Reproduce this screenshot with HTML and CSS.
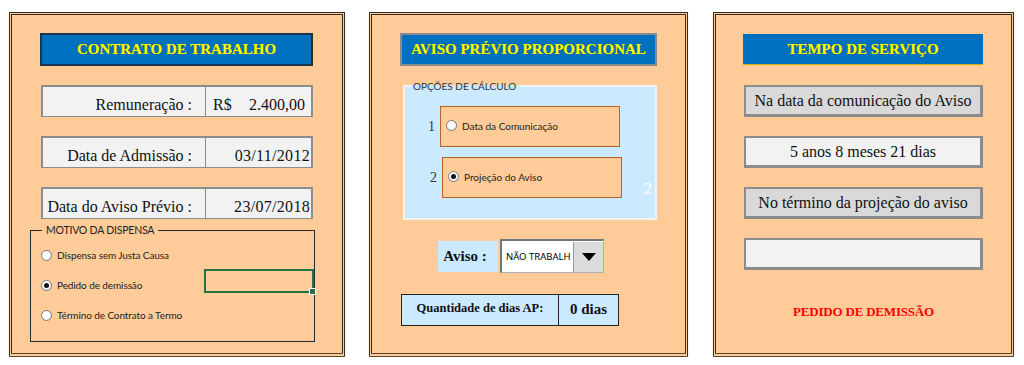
FILE: index.html
```html
<!DOCTYPE html>
<html lang="pt">
<head>
  <meta charset="UTF-8">
  <meta name="viewport" content="width=device-width, initial-scale=1.0">
  <title>Aviso Prévio</title>
  <link rel="stylesheet" href="styles.css">
</head>
<body>
  <div class="wrap">
    <div class="panel panel1">
      <div class="head head1">CONTRATO DE TRABALHO</div>
      <div class="row row-first">
        <span class="cell-l">Remuneração :</span>
        <span class="cell-r money"><span>R$</span><span>2.400,00</span></span>
      </div>
      <div class="row">
        <span class="cell-l">Data de Admissão :</span>
        <span class="cell-r">03/11/2012</span>
      </div>
      <div class="row">
        <span class="cell-l">Data do Aviso Prévio :</span>
        <span class="cell-r">23/07/2018</span>
      </div>
      <fieldset class="motivo">
        <legend>MOTIVO DA DISPENSA</legend>
        <div class="opt"><span class="radio"></span>Dispensa sem Justa Causa</div>
        <div class="opt opt-sel">
          <span class="radio on"></span>Pedido de demissão
          <span class="sel-cell"></span>
        </div>
        <div class="opt"><span class="radio"></span>Término de Contrato a Termo</div>
      </fieldset>
    </div>

    <div class="panel panel2">
      <div class="head head2">AVISO PRÉVIO PROPORCIONAL</div>
      <fieldset class="opcoes">
        <legend>OPÇÕES DE CÁLCULO</legend>
        <div class="choice choice1">
          <span class="num">1</span>
          <div class="choice-box"><span class="radio"></span>Data da Comunicação</div>
        </div>
        <div class="choice choice2">
          <span class="num">2</span>
          <div class="choice-box"><span class="radio on"></span>Projeção do Aviso</div>
        </div>
        <span class="ghost">2</span>
      </fieldset>
      <div class="aviso">
        <span class="aviso-label">Aviso :</span>
        <div class="combo">
          <span class="combo-text">NÃO TRABALH</span>
          <span class="combo-btn"></span>
        </div>
      </div>
      <div class="qtd">
        <span class="qtd-l">Quantidade de dias AP:</span>
        <span class="qtd-r">0 dias</span>
      </div>
    </div>

    <div class="panel panel3">
      <div class="head head3">TEMPO DE SERVIÇO</div>
      <div class="box dark box-first">Na data da comunicação do Aviso</div>
      <div class="box">5 anos 8 meses 21 dias</div>
      <div class="box dark">No término da projeção do aviso</div>
      <div class="box"></div>
      <p class="motivo-txt">PEDIDO DE DEMISSÃO</p>
    </div>
  </div>
</body>
</html>
```

FILE: styles.css
```css
html, body{
  margin: 0;
  padding: 0;
  background-color: #fff;
}
*{
  box-sizing: border-box;
}
.wrap{
  display: flex;
  padding: 12px 0 0 9px;
}
.panel{
  height: 345px;
  background-color: #ffcc99;
  border: 3px double #3a2d20;
  border-bottom: 4px double #5c4633;
  display: flex;
  flex-direction: column;
  font-family: "Liberation Serif", serif;
  box-shadow: 0 2px 1px #b5b5b5;
}
.panel1{
  width: 336px;
}
.panel2{
  width: 319px;
  margin-left: 24px;
}
.panel3{
  width: 301px;
  margin-left: 25px;
}
.head{
  height: 33px;
  margin-top: 18px;
  background-color: #0070c0;
  color: #ffff00;
  font-weight: bold;
  font-size: 15px;
  display: flex;
  justify-content: center;
  align-items: center;
  text-shadow: 0 0 1px #6a6a00;
}
.head1{
  margin-left: 28px;
  width: 273px;
  border: 2px solid #1d3550;
  border-right-color: #3a2a1a;
}
.head2{
  margin-left: 28px;
  width: 257px;
  border: 2px solid #8a8a8a;
}
.head3{
  margin-left: 27px;
  width: 240px;
  height: 31px;
  margin-top: 19px;
  border-bottom: 1px solid #c8b400;
}

/* panel 1 */
.row{
  margin-left: 29px;
  width: 272px;
  height: 32px;
  margin-top: 19px;
  display: flex;
  background-color: #f2f2f2;
  border: 2px solid #8c8c8c;
  border-bottom-width: 1px;
  font-size: 16px;
  color: #111;
}
.cell-l{
  width: 163px;
  border-right: 1px solid #8c8c8c;
  display: flex;
  justify-content: flex-end;
  align-items: flex-end;
  padding: 0 13px 2px 0;
  white-space: nowrap;
}
.cell-r{
  flex: 1;
  display: flex;
  justify-content: flex-end;
  align-items: flex-end;
  padding: 0 1px 2px 0;
  letter-spacing: 0.3px;
}
.money{
  justify-content: space-between;
  padding: 0 6px 2px 7px;
  letter-spacing: 0;
}
.motivo{
  margin: 5px 0 0 18px;
  width: 285px;
  height: 118px;
  border: 1px solid #2b2b2b;
  padding: 0 0 0 10px;
  font-family: Lato, sans-serif;
  font-size: 10px;
  letter-spacing: -0.1px;
  color: #222;
}
.motivo legend{
  padding: 0 4px;
  margin-left: 1px;
  font-size: 10.5px;
  letter-spacing: -0.2px;
  color: #222;
}
.opt{
  display: flex;
  align-items: center;
  height: 16px;
  margin-top: 11px;
  position: relative;
}
.opt + .opt{
  margin-top: 14px;
}
.radio{
  width: 11px;
  height: 11px;
  border-radius: 50%;
  border: 1px solid #7a7a7a;
  background: radial-gradient(circle at 40% 40%, #fff 0, #fff 45%, #e0e0e0 100%);
  margin-right: 5px;
  flex-shrink: 0;
  display: flex;
  justify-content: center;
  align-items: center;
}
.radio.on::after{
  content: "";
  width: 5px;
  height: 5px;
  border-radius: 50%;
  background-color: #111;
}
.sel-cell{
  position: absolute;
  left: 163px;
  top: -8px;
  width: 110px;
  height: 24px;
  border: 2px solid #217346;
}
.sel-cell::after{
  content: "";
  position: absolute;
  right: -4px;
  bottom: -4px;
  width: 5px;
  height: 5px;
  background-color: #217346;
  border: 1px solid #fff;
}

/* panel 2 */
.opcoes{
  margin: 14px 0 0 31px;
  width: 254px;
  height: 140px;
  padding: 0;
  border: 2px solid #f3f3f3;
  background-color: #cceaff;
  position: relative;
  font-family: Lato, sans-serif;
  font-size: 10px;
  color: #222;
}
.opcoes legend{
  margin-left: 6px;
  padding: 0 3px 0 2px;
  font-size: 10px;
  color: #333;
}
.choice{
  display: flex;
  align-items: center;
  margin-left: 23px;
}
.choice1{
  margin-top: 14px;
}
.choice2{
  margin-top: 10px;
  margin-left: 25px;
}
.num{
  font-family: "Liberation Serif", serif;
  font-size: 14px;
  color: #333;
  width: 12px;
}
.choice-box{
  width: 180px;
  height: 41px;
  background-color: #ffcc99;
  border: 1px solid #c0602a;
  display: flex;
  align-items: center;
  padding-left: 5px;
  padding-bottom: 2px;
}
.ghost{
  position: absolute;
  right: 3px;
  bottom: 0;
  color: #fff;
  font-family: "Liberation Serif", serif;
  font-size: 16px;
}
.aviso{
  display: flex;
  margin: 19px 0 0 66px;
  height: 34px;
}
.aviso-label{
  width: 60px;
  height: 31px;
  margin-top: 2px;
  background-color: #cceaff;
  font-weight: bold;
  font-size: 15px;
  display: flex;
  align-items: center;
  justify-content: center;
  padding-right: 6px;
  color: #111;
}
.combo{
  width: 104px;
  height: 34px;
  margin-left: 2px;
  background-color: #fff;
  border: 1px solid #b0b0b0;
  border-left: 2px solid #777;
  border-top: 2px solid #777;
  display: flex;
  align-items: center;
  font-family: "Noto Sans", sans-serif;
  font-size: 9.5px;
  color: #000;
}
.combo-text{
  flex: 1;
  padding-left: 4px;
  white-space: nowrap;
  overflow: hidden;
}
.combo-btn{
  width: 30px;
  height: 30px;
  background-color: #dcdcdc;
  border-left: 1px solid #999;
  display: flex;
  justify-content: center;
  align-items: center;
}
.combo-btn::after{
  content: "";
  border-left: 7px solid transparent;
  border-right: 7px solid transparent;
  border-top: 8px solid #000;
}
.qtd{
  display: flex;
  margin: 21px 0 0 29px;
  width: 218px;
  height: 32px;
  background-color: #cceaff;
  border: 1px solid #222;
  font-weight: bold;
  color: #111;
}
.qtd-l{
  width: 157px;
  border-right: 1px solid #222;
  display: flex;
  justify-content: center;
  align-items: center;
  font-size: 12.5px;
  padding-bottom: 4px;
}
.qtd-r{
  flex: 1;
  display: flex;
  justify-content: center;
  align-items: center;
  font-size: 15px;
  padding-bottom: 2px;
}

/* panel 3 */
.box{
  margin: 19px 0 0 28px;
  width: 239px;
  height: 32px;
  background-color: #f2f2f2;
  border: 2px solid #8c8c8c;
  border-right-width: 3px;
  border-bottom-width: 3px;
  display: flex;
  justify-content: center;
  align-items: center;
  font-size: 16px;
  color: #111;
}
.box-first{
  margin-top: 20px;
}
.dark{
  background-color: #d9d9d9;
}
.motivo-txt{
  margin: 34px 0 0;
  text-align: center;
  color: #ff0000;
  font-weight: bold;
  font-size: 13px;
  letter-spacing: -0.2px;
}
```
